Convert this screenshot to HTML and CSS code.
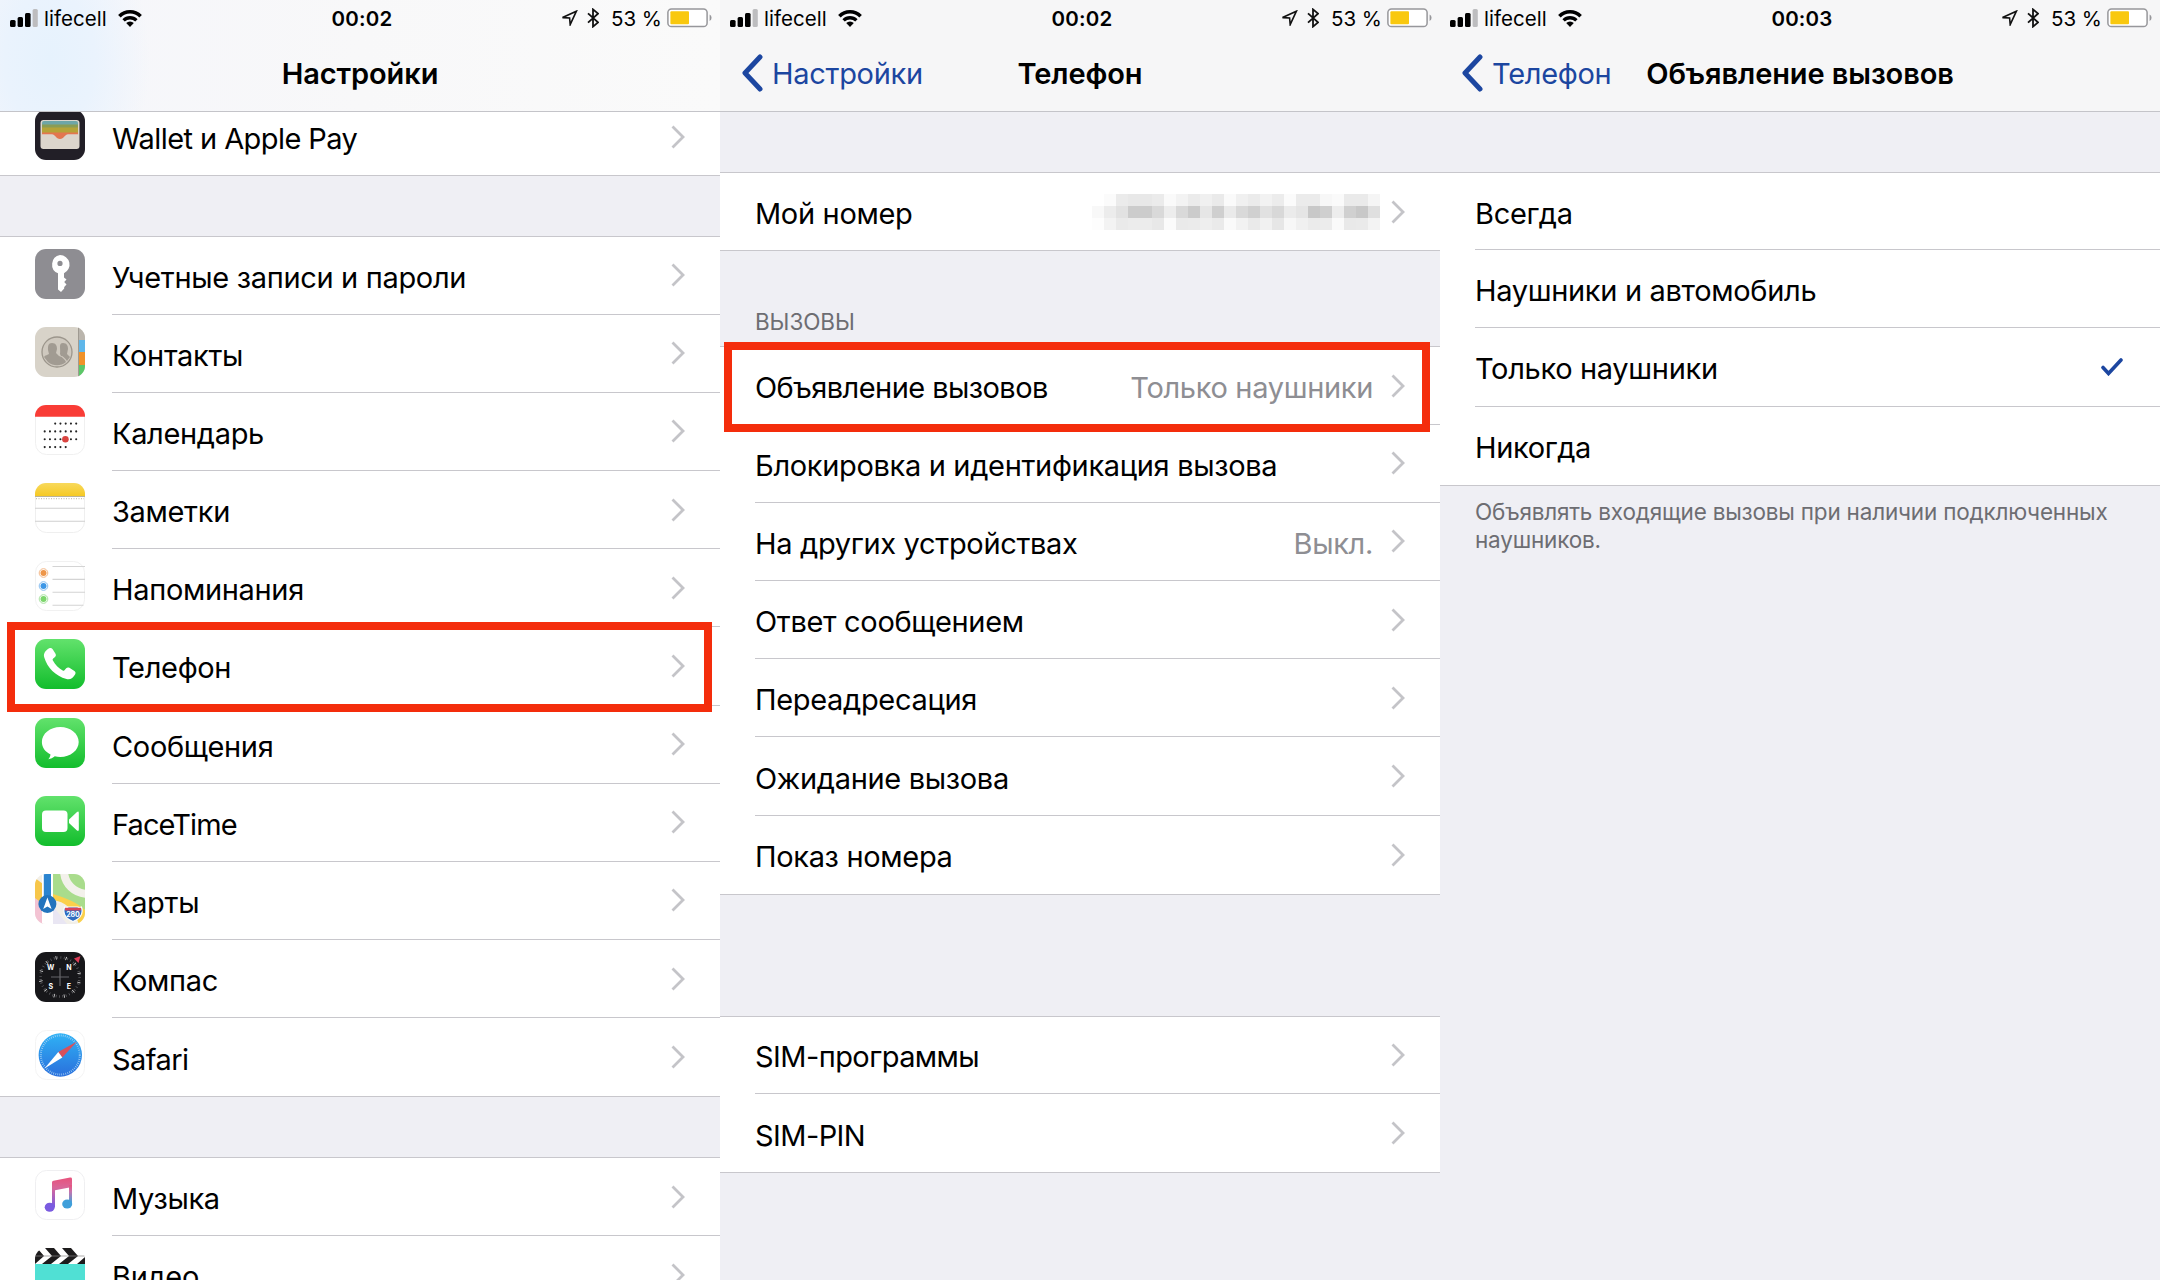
FILE: index.html
```html
<!DOCTYPE html>
<html lang="ru">

<head>
  <meta charset="UTF-8">
  <meta name="viewport" content="width=device-width, initial-scale=1.0">
  <title>Настройки | Объявление вызовов</title>
  <link rel="stylesheet" href="styles.css">
</head>

<body>
  <!-- shared glyphs -->
  <svg class="sprite" width="0" height="0">
    <defs>
      <linearGradient id="green" x1="0" y1="0" x2="0" y2="1">
        <stop offset="0" stop-color="#62e26c"/><stop offset="1" stop-color="#12bd2c"/>
      </linearGradient>
      <linearGradient id="blue" x1="0" y1="0" x2="0" y2="1">
        <stop offset="0" stop-color="#2fb2f5"/><stop offset="1" stop-color="#2a6fdc"/>
      </linearGradient>
      <linearGradient id="note" x1="0" y1="0" x2="0" y2="1">
        <stop offset="0" stop-color="#e8527c"/><stop offset=".35" stop-color="#d8679a"/><stop offset="1" stop-color="#7a5be0"/>
      </linearGradient>
      <linearGradient id="note2" x1="0" y1="0" x2="0" y2="1">
        <stop offset="0" stop-color="#e8527c"/><stop offset=".35" stop-color="#c574ae"/><stop offset="1" stop-color="#3aa3dc"/>
      </linearGradient>
      <linearGradient id="yellow" x1="0" y1="0" x2="0" y2="1">
        <stop offset="0" stop-color="#f8d95c"/><stop offset="1" stop-color="#f6c923"/>
      </linearGradient>
      <clipPath id="tile"><rect width="50" height="50" rx="11"/></clipPath>
    </defs>
    <symbol id="chevron" viewBox="0 0 14 24">
      <path d="M1.5 1.5 12 12 1.5 22.5" fill="none" stroke="#c4c4c8" stroke-width="2.8"/>
    </symbol>
    <symbol id="back" viewBox="0 0 22 38">
      <path d="M19 3 4 19 19 35" fill="none" stroke="#1c46a0" stroke-width="5" stroke-linecap="round" stroke-linejoin="round"/>
    </symbol>
    <symbol id="signal" viewBox="0 0 28 18">
      <rect x="0" y="11" width="5.6" height="7" rx="1.5"/>
      <rect x="7.6" y="8" width="5.4" height="10" rx="1.5"/>
      <rect x="15" y="4" width="5.6" height="14" rx="1.5"/>
      <rect x="22.6" y="0" width="5.2" height="18" rx="1.5" fill="#bdbdbf"/>
    </symbol>
    <symbol id="wifi" viewBox="0 0 24 17">
      <path d="M1.4 6.2a15 15 0 0 1 21.2 0" fill="none" stroke="#000" stroke-width="3.6"/>
      <path d="M5.6 10.4a9 9 0 0 1 12.8 0" fill="none" stroke="#000" stroke-width="3.3"/>
      <path d="M12 17 8.2 13.1a5.4 5.4 0 0 1 7.6 0z"/>
    </symbol>
    <symbol id="location" viewBox="0 0 17 16">
      <path d="M1.5 7.6 15.4 1.2 9.2 14.6 8.6 8z" fill="none" stroke="#111" stroke-width="1.6" stroke-linejoin="miter"/>
    </symbol>
    <symbol id="bluetooth" viewBox="0 0 12 20">
      <path d="M1 5.4 11 14.4 6 18.6V1.4L11 5.6 1 14.6" fill="none" stroke="#111" stroke-width="1.8"/>
    </symbol>
    <symbol id="battery" viewBox="0 0 46 20">
      <rect x=".9" y=".9" width="39.2" height="17.6" rx="3.6" fill="#fff" stroke="#97979b" stroke-width="1.5"/>
      <rect x="3.4" y="3.2" width="18.6" height="13" rx="1" fill="#f9c80e"/>
      <path d="M42.6 6.6a3.6 3.6 0 0 1 0 6.4z" fill="#97979b"/>
    </symbol>
  </svg>

  <div class="screens">

    <div class="screen">
      <header class="tinted">
        <div class="status">
          <div class="status-left">
            <svg class="signal"><use href="#signal"/></svg><span class="carrier">lifecell</span><svg class="wifi"><use href="#wifi"/></svg>
          </div>
          <div class="time">00:02</div>
          <div class="status-right">
            <svg class="location"><use href="#location"/></svg><svg class="bluetooth"><use href="#bluetooth"/></svg><span class="percent">53 %</span><svg class="battery"><use href="#battery"/></svg>
          </div>
        </div>
        <nav>
          <h1>Настройки</h1>
        </nav>
      </header>

      <ul class="list icons first">
        <li>
          <svg class="icon" viewBox="0 0 50 50"><rect width="50" height="50" rx="11" fill="#221f27"/><rect x="5.5" y="10" width="39" height="29" rx="3" fill="#dcd5cc"/><path d="M7 15v-2q0-2 2-2h32q2 0 2 2v2z" fill="#6ea6a8"/><path d="M7 14.500h36v4H7z" fill="#8a9c55"/><path d="M7 17.500h36V23H7z" fill="#b5a338"/><path d="M7 22.500h36v1.800H33c-3 0-4 4.700-8 4.700s-5-4.700-8-4.700H7z" fill="#e3764f"/></svg>
          <div class="cell"><span class="label tight">Wallet и Apple Pay</span><svg class="chevron"><use href="#chevron"/></svg></div>
        </li>
      </ul>

      <ul class="list icons">
        <li>
          <svg class="icon" viewBox="0 0 50 50"><rect width="50" height="50" rx="11" fill="#8e8d92"/><path fill="#fff" fill-rule="evenodd" d="M25 6a9.600 9.600 0 0 1 4 18.300v4.200l2.500 2-2.300 2.600 2.300 2.400-2.300 2.600v1.500L26 43l-3-2.500V24.300A9.600 9.600 0 0 1 25 6zm0 5.800a2.600 2.600 0 1 0 0 5.200 2.600 2.600 0 0 0 0-5.200z"/></svg>
          <div class="cell"><span class="label">Учетные записи и пароли</span><svg class="chevron"><use href="#chevron"/></svg></div>
        </li>
        <li>
          <svg class="icon" viewBox="0 0 50 50"><g clip-path="url(#tile)"><rect width="50" height="50" fill="#d8d3c9"/><path d="M43 0h7v13h-7z" fill="#bab5ad"/><path d="M44 13h6v12h-6z" fill="#5fb7ea"/><path d="M44 25h6v13h-6z" fill="#f0922a"/><path d="M44 38h6v12h-6z" fill="#5bc768"/><path d="M43.500 0v50" stroke="#9f9a91"/></g><circle cx="22" cy="25" r="15" fill="#cfc9bf" stroke="#9c968c" stroke-width="1.300"/><path fill="#a19b92" d="M17 16c4 0 5 3 5 6l-1 4 3 3c4 1 6 4 7 6a14 14 0 0 1-18 0l-4-5c1-2 4-2 5-3l-1-4c0-4 0-7 4-7zM28 16c4 0 5 3 5 6l-1 5 3 3-3 4c-2-3-4-5-6-5l-1-2c1-5-2-11 3-11z"/></svg>
          <div class="cell"><span class="label">Контакты</span><svg class="chevron"><use href="#chevron"/></svg></div>
        </li>
        <li>
          <svg class="icon" viewBox="0 0 50 50"><rect x=".5" y=".5" width="49" height="49" rx="11" fill="#fff" stroke="#f0f0f0"/><path d="M0 11.700V11A11 11 0 0 1 11 0h28a11 11 0 0 1 11 11v.7z" fill="#f93c36"/><g fill="none" stroke="#222" stroke-width="2.100" stroke-linecap="round" stroke-dasharray="0 5.250"><path d="M20.200 18.600h21.300"/><path d="M9.700 26.400h31.800"/><path d="M9.700 34.200h31.800"/><path d="M9.700 42.100h21.300"/></g><circle cx="30.400" cy="34.200" r="3.300" fill="#d9433f"/></svg>
          <div class="cell"><span class="label">Календарь</span><svg class="chevron"><use href="#chevron"/></svg></div>
        </li>
        <li>
          <svg class="icon" viewBox="0 0 50 50"><rect x=".5" y=".5" width="49" height="49" rx="11" fill="#fff" stroke="#efefef"/><path d="M0 13V11A11 11 0 0 1 11 0h28a11 11 0 0 1 11 11v2z" fill="url(#yellow)"/><path d="M0 13.500h50" stroke="#b9b29a" stroke-width="1.200"/><path d="M1 15.700h48" stroke="#c9c4b2" stroke-width="1.200" stroke-dasharray="1 1.500"/><path d="M0 25.300h50M0 38.200h50" stroke="#d0d0d0" stroke-width="1.100"/></svg>
          <div class="cell"><span class="label">Заметки</span><svg class="chevron"><use href="#chevron"/></svg></div>
        </li>
        <li>
          <svg class="icon" viewBox="0 0 50 50"><rect x=".5" y=".5" width="49" height="49" rx="11" fill="#fff" stroke="#f1f1f1"/><path d="M17.500 5.500H50M17.500 18.400H50M17.500 31.300H50M17.500 44.200h31" stroke="#d4d4d4" stroke-width="1.100"/><g fill="#fff" stroke-width="1"><circle cx="8.500" cy="12" r="4.300" stroke="#f5b887"/><circle cx="8.500" cy="25" r="4.300" stroke="#85bdf0"/><circle cx="8.500" cy="38" r="4.300" stroke="#a8e3a0"/></g><circle cx="8.500" cy="12" r="3" fill="#ee9649"/><circle cx="8.500" cy="25" r="3" fill="#3d97e6"/><circle cx="8.500" cy="38" r="3" fill="#7dd66c"/></svg>
          <div class="cell"><span class="label">Напоминания</span><svg class="chevron"><use href="#chevron"/></svg></div>
        </li>
        <li class="marked">
          <svg class="icon" viewBox="0 0 50 50"><rect width="50" height="50" rx="11" fill="url(#green)"/><path fill="#fff" d="M14.200 9.300c1.300-.8 2.500-.4 3.300.8l3 4.700c.7 1.200.5 2.400-.5 3.200l-1.800 1.400c-.7.600-.7 1.200-.3 2 2.300 4.300 5.600 7.600 9.800 10 .8.500 1.500.4 2-.3l1.500-1.800c.8-1 2-1.200 3.200-.5l5 3.200c1.200.8 1.500 2 .8 3.200-2 3.700-4.800 5.700-8.700 4.800C20.500 37.200 12.300 28.800 9.200 18.300c-1.100-4 1.500-7 5-9z"/></svg>
          <div class="cell"><span class="label">Телефон</span><svg class="chevron"><use href="#chevron"/></svg></div>
        </li>
        <li>
          <svg class="icon" viewBox="0 0 50 50"><rect width="50" height="50" rx="11" fill="url(#green)"/><path fill="#fff" d="M25.300 9c10.200 0 18.400 6.700 18.400 15s-8.200 15-18.400 15c-2 0-3.800-.2-5.500-.7-1.800 1.500-4 2.700-6.600 3 1.200-1.200 2-2.800 2.300-4.900C10 33.700 6.900 29.200 6.900 24c0-8.300 8.200-15 18.400-15z"/></svg>
          <div class="cell"><span class="label">Сообщения</span><svg class="chevron"><use href="#chevron"/></svg></div>
        </li>
        <li>
          <svg class="icon" viewBox="0 0 50 50"><rect width="50" height="50" rx="11" fill="url(#green)"/><rect x="7" y="14.500" width="25.500" height="21.500" rx="4" fill="#fff"/><path d="M34 23.500 42 16q1.800-1.300 1.800 1v16.500q0 2.300-1.800 1L34 27z" fill="#fff"/></svg>
          <div class="cell"><span class="label tighter">FaceTime</span><svg class="chevron"><use href="#chevron"/></svg></div>
        </li>
        <li>
          <svg class="icon" viewBox="0 0 50 50"><g clip-path="url(#tile)"><rect width="50" height="50" fill="#f2efe8"/><path d="M18 0h32v36L34 30l-16-5z" fill="#a9dc8c"/><path d="M0 4 8 10v20H0z" fill="#f7c64a"/><path d="M0 24 8 30v20H0z" fill="#f3c3d3"/><path d="M18 26c12 2 20 8 26 24h6V36C42 28 30 24 18 20z" fill="#fbd04b"/><path d="M29-2c1 12 10 21 23 22" fill="none" stroke="#f3f1eb" stroke-width="8"/><path d="M18 32l14 18H18z" fill="#e9e6f3"/><path d="M7 0h11v50H7z" fill="#fff"/><path d="M8.800 0h7.200v26H8.800z" fill="#2b84cf"/><circle cx="12.400" cy="30" r="9" fill="#2374bd"/><path d="M12.400 23.500 16.600 35l-4.200-2.600L8.200 35z" fill="#fff"/><path d="M29.500 33q2 1 4 0h9q2 1 4 0c1.500 5 1 11-8.500 14.500-9.500-3.500-10-9.500-8.500-14.500z" fill="#2f6dc0" stroke="#fff" stroke-width="1.200"/><path d="M30 33.800h16v2.600H30z" fill="#d9455a"/></g><text x="38" y="43" class="shield">280</text></svg>
          <div class="cell"><span class="label">Карты</span><svg class="chevron"><use href="#chevron"/></svg></div>
        </li>
        <li>
          <svg class="icon" viewBox="0 0 50 50"><rect width="50" height="50" rx="11" fill="#17171a"/><circle cx="25" cy="25" r="19.500" fill="none" stroke="#d8d8d8" stroke-width="3.500" stroke-dasharray=".8 9.410" stroke-dashoffset="5"/><circle cx="25" cy="25" r="19.500" fill="none" stroke="#66666a" stroke-width="2.500" stroke-dasharray=".7 2.703"/><path d="M25 16v18M16 25h18" stroke="#66666a" stroke-width="1.200"/><path d="m45.500 4-2 7-4.500-4.500z" fill="#dd3b56"/><g class="points"><text x="15.700" y="18">W</text><text x="34" y="18">N</text><text x="15.700" y="37">S</text><text x="34" y="37">E</text></g></svg>
          <div class="cell"><span class="label">Компас</span><svg class="chevron"><use href="#chevron"/></svg></div>
        </li>
        <li>
          <svg class="icon" viewBox="0 0 50 50"><rect x=".5" y=".5" width="49" height="49" rx="11" fill="#fff" stroke="#f4f4f4"/><circle cx="25.300" cy="25" r="21.700" fill="url(#blue)"/><circle cx="25.300" cy="25" r="19.500" fill="none" stroke="#a9d4f5" stroke-width="2" stroke-dasharray=".7 1.342"/><path d="M42 11.500 23.300 22l4 5.500z" fill="#d8505c"/><path d="M9.500 38.500 23.300 22l4 5.500z" fill="#fff"/></svg>
          <div class="cell"><span class="label tight">Safari</span><svg class="chevron"><use href="#chevron"/></svg></div>
        </li>
      </ul>

      <ul class="list icons">
        <li>
          <svg class="icon" viewBox="0 0 50 50"><rect x=".5" y=".5" width="49" height="49" rx="11" fill="#fff" stroke="#efeff1"/><path d="M17 12.500q0-1.500 1.500-1.800L35 7.600q2-.3 2 1.400V17l-17 3.300V37h-3z" fill="url(#note)"/><path d="M34 15h3v19h-3z" fill="url(#note2)"/><ellipse cx="14.700" cy="37.300" rx="5" ry="4.500" fill="#7a5be0"/><ellipse cx="32.200" cy="34" rx="5" ry="4.500" fill="#3f9fda"/></svg>
          <div class="cell"><span class="label">Музыка</span><svg class="chevron"><use href="#chevron"/></svg></div>
        </li>
        <li>
          <svg class="icon" viewBox="0 0 50 50"><rect y="15.500" width="50" height="34.500" fill="#50e0d4"/><g clip-path="url(#tile)"><path d="M0 0h50v16H0z" fill="#fff"/><path d="M3 1 9 8 0 16V4zM10 0h9l7 8-10 8H7l10-8zM27 0h9l7 8-10 8h-9l10-8zM50 9v7h-8z" fill="#1d1b1c"/><path d="M0 8h50" stroke="#8a8888" stroke-width=".7"/></g></svg>
          <div class="cell"><span class="label">Видео</span><svg class="chevron"><use href="#chevron"/></svg></div>
        </li>
      </ul>
    </div>

    <div class="screen">
      <header>
        <div class="status">
          <div class="status-left">
            <svg class="signal"><use href="#signal"/></svg><span class="carrier">lifecell</span><svg class="wifi"><use href="#wifi"/></svg>
          </div>
          <div class="time">00:02</div>
          <div class="status-right">
            <svg class="location"><use href="#location"/></svg><svg class="bluetooth"><use href="#bluetooth"/></svg><span class="percent">53 %</span><svg class="battery"><use href="#battery"/></svg>
          </div>
        </div>
        <nav>
          <a class="back" href="#settings"><svg><use href="#back"/></svg>Настройки</a>
          <h1>Телефон</h1>
        </nav>
      </header>

      <ul class="list">
        <li><div class="cell"><span class="label">Мой номер</span><svg class="number" id="number" viewBox="0 0 24 3" preserveAspectRatio="none" shape-rendering="crispEdges"></svg><svg class="chevron"><use href="#chevron"/></svg></div></li>
      </ul>

      <h2>Вызовы</h2>
      <ul class="list calls">
        <li class="marked"><div class="cell"><span class="label tight">Объявление вызовов</span><span class="value">Только наушники</span><svg class="chevron"><use href="#chevron"/></svg></div></li>
        <li><div class="cell"><span class="label">Блокировка и идентификация вызова</span><svg class="chevron"><use href="#chevron"/></svg></div></li>
        <li><div class="cell"><span class="label">На других устройствах</span><span class="value">Выкл.</span><svg class="chevron"><use href="#chevron"/></svg></div></li>
        <li><div class="cell"><span class="label">Ответ сообщением</span><svg class="chevron"><use href="#chevron"/></svg></div></li>
        <li><div class="cell"><span class="label">Переадресация</span><svg class="chevron"><use href="#chevron"/></svg></div></li>
        <li><div class="cell"><span class="label">Ожидание вызова</span><svg class="chevron"><use href="#chevron"/></svg></div></li>
        <li><div class="cell"><span class="label">Показ номера</span><svg class="chevron"><use href="#chevron"/></svg></div></li>
      </ul>

      <ul class="list sim">
        <li><div class="cell"><span class="label tight">SIM-программы</span><svg class="chevron"><use href="#chevron"/></svg></div></li>
        <li><div class="cell"><span class="label tight">SIM-PIN</span><svg class="chevron"><use href="#chevron"/></svg></div></li>
      </ul>
    </div>

    <div class="screen">
      <header>
        <div class="status">
          <div class="status-left">
            <svg class="signal"><use href="#signal"/></svg><span class="carrier">lifecell</span><svg class="wifi"><use href="#wifi"/></svg>
          </div>
          <div class="time">00:03</div>
          <div class="status-right">
            <svg class="location"><use href="#location"/></svg><svg class="bluetooth"><use href="#bluetooth"/></svg><span class="percent">53 %</span><svg class="battery"><use href="#battery"/></svg>
          </div>
        </div>
        <nav>
          <a class="back" href="#phone"><svg><use href="#back"/></svg>Телефон</a>
          <h1>Объявление вызовов</h1>
        </nav>
      </header>

      <ul class="list">
        <li><div class="cell"><span class="label">Всегда</span></div></li>
        <li><div class="cell"><span class="label">Наушники и автомобиль</span></div></li>
        <li><div class="cell"><span class="label">Только наушники</span><svg class="check" viewBox="0 0 22 18"><path d="M2 9.500 7.500 15.500 20 2" fill="none" stroke="#1c46a0" stroke-width="3.600" stroke-linecap="round"/></svg></div></li>
        <li><div class="cell"><span class="label">Никогда</span></div></li>
      </ul>
      <p class="note">Объявлять входящие вызовы при наличии подключенных наушников.</p>
    </div>

  </div>

  <script>
    // hidden phone number: three rows of grey cells
    const shades = [
      'ff fb eb e8 e8 eb fa f3 eb f0 ea fa f0 eb f2 ec fb eb eb f7 fa ea ea f5',
      'f8 ec e2 cc cc d9 ed d9 cb e6 cf ea d9 d0 e1 d8 eb e5 c8 cf ed d0 c8 df',
      'fd f3 ea ec ec e8 fb ea eb ee ea fa f2 ea f1 e6 f7 f0 eb ec fa e9 ea f3'
    ];
    let cells = '';
    shades.forEach((row, y) => {
      row.split(' ').forEach((c, x) => {
        cells += `<rect x="${x}" y="${y}" width="1" height="1" fill="#${c}${c}${c}"/>`;
      });
    });
    document.getElementById('number').innerHTML = cells;
  </script>
</body>

</html>
```
FILE: styles.css
```css
*,
*::after {
  box-sizing: border-box;
}

body,
html {
  margin: 0;
  padding: 0;
  height: 100%;
  overflow: hidden;
  background-color: #efeff4;
  font-family: Inter, 'Helvetica Neue', Arial, sans-serif;
  color: #000;
}

.sprite {
  position: absolute;
}

.screens {
  display: grid;
  grid-template-columns: repeat(3, 720px);
  height: 1280px;
}

.screen {
  height: 1280px;
  overflow: hidden;
  background-color: #efeff4;
}

/* header */
header {
  height: 112px;
  border-bottom: 1px solid #c4c4c9;
  background-color: #f6f6f7;
}

header.tinted {
  background: radial-gradient(ellipse 100px 150px at 50px 60px, #e6f2fd 0%, #eaf3fd 45%, rgba(246, 247, 251, 0) 100%), linear-gradient(90deg, #f5f6fb, #f8f8f9 50%, #fafafa);
}

.status {
  display: grid;
  grid-template-columns: 1fr auto 1fr;
  align-items: center;
  height: 36px;
  padding: 0 7px 0 10px;
  font-size: 20.5px;
}

.status-left,
.status-right {
  display: flex;
  align-items: center;
}

.status-right {
  justify-content: flex-end;
}

.signal {
  width: 28px;
  height: 18px;
}

.carrier {
  margin-left: 6px;
  letter-spacing: 0.05px;
}

.wifi {
  width: 24px;
  height: 17px;
  margin-left: 11px;
}

.time {
  padding-left: 1px;
  font-weight: 600;
  letter-spacing: 0.2px;
}

.location {
  width: 17px;
  height: 16px;
}

.bluetooth {
  width: 12px;
  height: 20px;
  margin: 0 12px 0 9px;
}

.battery {
  width: 46px;
  height: 20px;
  margin-left: 5px;
}

nav {
  display: grid;
  grid-template-columns: 1fr auto 1fr;
  align-items: center;
  height: 74px;
  padding-left: 21px;
  padding-right: 21px;
}

h1 {
  grid-column: 2;
  margin: 0;
  font-size: 29px;
  font-weight: 600;
  letter-spacing: -0.1px;
}

.back {
  display: flex;
  align-items: center;
  font-size: 29px;
  letter-spacing: -0.3px;
  color: #1c46a0;
  text-decoration: none;
}

.back svg {
  width: 22px;
  height: 38px;
  margin-right: 9px;
}

/* lists */
.list {
  margin: 60px 0 0;
  padding: 0;
  list-style: none;
  background-color: #fff;
  border-top: 1px solid #c8c7cc;
  border-bottom: 1px solid #c8c7cc;
}

.list.first {
  margin-top: -13.8px;
  border-top: 0;
  clip-path: inset(13.8px 0 0 0);
}

.list li {
  position: relative;
  display: flex;
  height: 78.2px;
  padding-left: 35px;
}

.list li:first-child {
  height: 77.2px;
}

.icon {
  flex: none;
  width: 50px;
  height: 50px;
  margin: 12px 27px 0 0;
}

.list li:first-child .icon {
  margin-top: 11.5px;
}

.cell {
  flex: 1;
  display: flex;
  align-items: center;
  padding: 0 35px 0 0;
  border-bottom: 1px solid #c8c7cc;
}

.list li:last-child .cell {
  border-bottom: 0;
}

.label {
  flex: 1;
  padding-top: 4px;
  font-size: 29px;
  letter-spacing: -0.33px;
  white-space: nowrap;
}

.label.tight {
  letter-spacing: -0.57px;
}

.label.tighter {
  letter-spacing: -0.9px;
}

.value {
  padding-top: 4px;
  margin-right: 18px;
  font-size: 29px;
  letter-spacing: -0.33px;
  color: #8e8e93;
}

.chevron {
  width: 14px;
  height: 24px;
}

.number {
  width: 288px;
  height: 36px;
  margin-right: 11px;
}

.check {
  width: 22px;
  height: 18px;
  margin-right: 2px;
}

h2 {
  margin: 0;
  height: 95.3px;
  padding: 57px 35px 0;
  font-size: 22.5px;
  font-weight: 400;
  line-height: 28px;
  letter-spacing: -0.1px;
  text-transform: uppercase;
  color: #6d6d72;
}

.calls {
  margin-top: 0;
}

.sim {
  margin-top: 121px;
}

.note {
  margin: 0;
  padding: 12px 35px;
  font-size: 22.5px;
  line-height: 28px;
  letter-spacing: -0.2px;
  color: #6d6d72;
}

/* red frame round the row to tap */
.marked::after {
  content: '';
  position: absolute;
  z-index: 1;
  top: -5px;
  left: 7px;
  right: 8px;
  height: 90px;
  border: 8.5px solid #f42d0c;
}

.calls .marked::after {
  left: 4px;
  right: 10px;
}

.shield {
  font-size: 7px;
  font-weight: 700;
  text-anchor: middle;
  fill: #fff;
}

.points {
  font-size: 7px;
  font-weight: 700;
  text-anchor: middle;
  fill: #fff;
}
```
